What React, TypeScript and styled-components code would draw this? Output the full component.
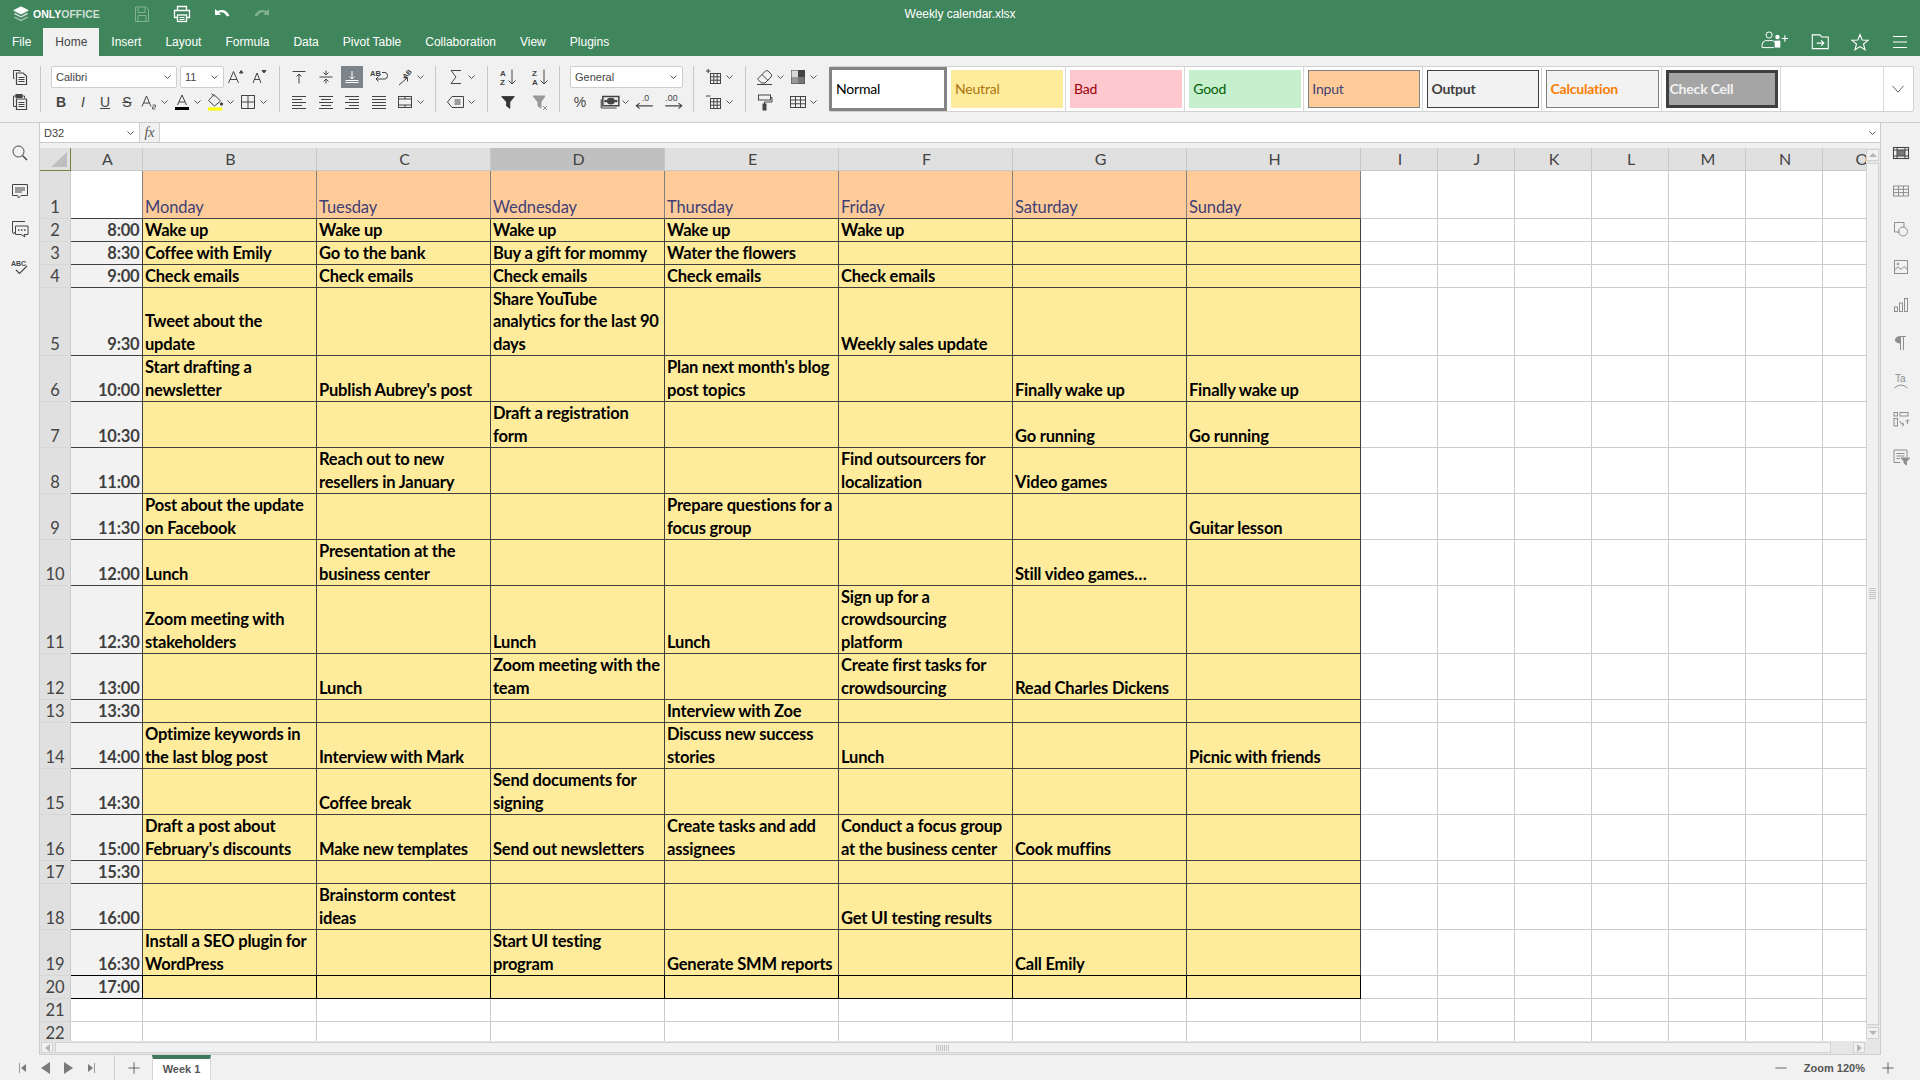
import React from 'react';
import styled, { createGlobalStyle } from 'styled-components';

const GlobalStyle = createGlobalStyle`
	html, body {
		margin: 0;
		padding: 0;
		width: 1920px;
		height: 1080px;
		overflow: hidden;
		background: #f1f1f1;
		font-family: "Liberation Sans", Arial, sans-serif;
	}
	* {
		box-sizing: border-box;
	}
`;

const Page = styled.div`
	display: flex;
	flex-direction: column;
	width: 1920px;
	height: 1080px;
`;

/* green header */
const Header = styled.header`
	flex: 0 0 56px;
	display: flex;
	flex-direction: column;
	background: #40865c;
	color: #ffffff;
	font-size: 12px;
`;

const TitleRow = styled.div`
	height: 28px;
	display: grid;
	grid-template-columns: 1fr auto 1fr;
	align-items: center;
`;

const TitleLeft = styled.div`
	display: flex;
	align-items: center;
`;

const Logo = styled.div`
	display: flex;
	align-items: center;
	gap: 3px;
	width: 122px;
	padding-left: 12px;
	font-size: 10.5px;
	font-weight: 700;
`;

const LogoDim = styled.span`
	color: rgba(255, 255, 255, 0.75);
`;

const QuickButton = styled.div<{ $dim?: boolean }>`
	width: 40px;
	height: 28px;
	display: flex;
	align-items: center;
	justify-content: center;
	opacity: ${(p) => (p.$dim ? 0.35 : 1)};
`;

const FileName = styled.div`
	font-size: 12px;
	letter-spacing: -0.05px;
`;

const TabRow = styled.nav`
	height: 28px;
	display: flex;
	align-items: stretch;
`;

const Tab = styled.div<{ $active?: boolean }>`
	padding: 0 12px;
	display: flex;
	align-items: center;
	background: ${(p) => (p.$active ? '#f1f1f1' : 'transparent')};
	color: ${(p) => (p.$active ? '#444444' : '#ffffff')};
`;

const HeaderActions = styled.div`
	margin-left: auto;
	display: flex;
	align-items: center;
	padding-right: 8px;
	gap: 16px;
`;

const HeaderAction = styled.div<{ $mr?: number }>`
	width: 24px;
	height: 28px;
	margin-right: ${(p) => p.$mr ?? 0}px;
	display: flex;
	align-items: center;
	justify-content: center;
`;

/* ribbon */
const Toolbar = styled.div`
	flex: 0 0 66px;
	display: flex;
	align-items: flex-start;
	padding-top: 10px;
	background: #f1f1f1;
`;

const Group = styled.div<{ $w: number; $pad?: number; $plain?: boolean }>`
	flex: 0 0 ${(p) => p.$w}px;
	height: 46px;
	padding-left: ${(p) => p.$pad ?? 9}px;
	display: flex;
	flex-direction: column;
	gap: 3px;
	border-right: ${(p) => (p.$plain ? 'none' : '1px solid #c8c8c8')};
`;

const Row = styled.div<{ $gap?: number }>`
	height: 22px;
	display: flex;
	align-items: center;
	gap: ${(p) => p.$gap ?? 0}px;
`;

const Btn = styled.div<{ $active?: boolean; $ml?: number }>`
	flex: 0 0 22px;
	height: 22px;
	margin-left: ${(p) => p.$ml ?? 0}px;
	display: flex;
	align-items: center;
	justify-content: center;
	color: #444444;
	background: ${(p) => (p.$active ? '#7d858b' : 'transparent')};
`;

const Split = styled.div<{ $ml?: number }>`
	flex: 0 0 33px;
	height: 22px;
	margin-left: ${(p) => p.$ml ?? 0}px;
	display: flex;
	align-items: center;
`;

const Combo = styled.div<{ $w: number; $ml?: number }>`
	flex: 0 0 ${(p) => p.$w}px;
	height: 22px;
	margin-left: ${(p) => p.$ml ?? 1}px;
	padding: 0 4px;
	display: flex;
	align-items: center;
	justify-content: space-between;
	background: #ffffff;
	border: 1px solid #cfcfcf;
	border-radius: 2px;
	font-size: 11px;
	color: #444444;
`;

const TextIcon = styled.span<{ $weight?: number; $italic?: boolean; $deco?: string }>`
	font-family: "Liberation Sans", Arial, sans-serif;
	font-size: 14px;
	font-weight: ${(p) => p.$weight ?? 400};
	font-style: ${(p) => (p.$italic ? 'italic' : 'normal')};
	text-decoration: ${(p) => p.$deco ?? 'none'};
	color: #444444;
`;

const Glyph = styled.svg.attrs({ viewBox: '0 0 20 20', fill: 'none' })<{ $size?: number }>`
	width: ${(p) => p.$size ?? 20}px;
	height: ${(p) => p.$size ?? 20}px;
	stroke: #444444;
	stroke-width: 1;
	flex: none;
	display: block;
`;

const WhiteGlyph = styled(Glyph)`
	stroke: #ffffff;
`;

const GreyGlyph = styled(Glyph)`
	stroke: #8f8f8f;
`;

const ChevronMark = styled.svg.attrs({ viewBox: '0 0 9 6', fill: 'none' })`
	width: 9px;
	height: 6px;
	stroke: #555555;
	stroke-width: 1;
	flex: none;
`;

const Chevron = () => (
	<ChevronMark>
		<path d="M1.5 1.5 L4.5 4.5 L7.5 1.5" />
	</ChevronMark>
);

/* cell style gallery */
const Gallery = styled.div`
	flex: 0 0 1084.5px;
	height: 46px;
	display: flex;
	background: #ffffff;
	border: 1px solid #d2d2d2;
	border-radius: 2px;
`;

const SelectedItem = styled.div`
	flex: 0 0 118px;
	margin-left: -1px;
	display: flex;
	border: 3px solid #848484;
`;

const StyleItem = styled.div`
	flex: 0 0 119.1px;
	padding: 3px 2px 3px 4px;
	border-right: 1px solid #d8d8d8;
	display: flex;
`;

const StyleFill = styled.div<{ $bg: string; $fg: string; $border?: string; $bold?: boolean; $bw?: number }>`
	flex: 1;
	display: flex;
	align-items: center;
	padding-left: ${(p) => (p.$border ? 4 - (p.$bw ?? 1) : 4)}px;
	padding-bottom: 2px;
	background: ${(p) => p.$bg};
	color: ${(p) => p.$fg};
	border: ${(p) => (p.$border ? `${p.$bw ?? 1}px solid ${p.$border}` : 'none')};
	font-family: Lato, sans-serif;
	font-size: 14px;
	font-weight: ${(p) => (p.$bold ? 700 : 400)};
	letter-spacing: -0.2px;
`;

const GalleryBlank = styled.div`
	flex: 1;
	border-right: 1px solid #d8d8d8;
`;

const GalleryMore = styled.div`
	flex: 0 0 29px;
	display: flex;
	align-items: center;
	justify-content: center;
`;

/* work area */
const Body = styled.div`
	flex: 0 0 933px;
	min-height: 0;
	display: flex;
	border-top: 1px solid #cbcbcb;
`;

const Rail = styled.aside<{ $side: 'left' | 'right' }>`
	flex: 0 0 40px;
	display: flex;
	flex-direction: column;
	align-items: center;
	gap: 18px;
	padding-top: 20px;
	background: #f1f1f1;
	border-${(p) => (p.$side === 'left' ? 'right' : 'left')}: 1px solid #cbcbcb;
`;

const Center = styled.main`
	flex: 1;
	min-width: 0;
	min-height: 0;
	display: flex;
	flex-direction: column;
`;

const FormulaBar = styled.div`
	flex: 0 0 20px;
	display: flex;
	background: #ffffff;
	border-bottom: 1px solid #cbcbcb;
`;

const NameBox = styled.div`
	flex: 0 0 100px;
	padding: 0 4px;
	display: flex;
	align-items: center;
	justify-content: space-between;
	border-right: 1px solid #d0d0d0;
	font-size: 11px;
	color: #444444;
`;

const FxBox = styled.div`
	flex: 0 0 20px;
	display: flex;
	align-items: center;
	justify-content: center;
	background: #f1f1f1;
	border-right: 1px solid #d0d0d0;
	font-family: "Liberation Serif", serif;
	font-style: italic;
	font-size: 14px;
	color: #555555;
`;

const FormulaInput = styled.div`
	flex: 1;
	display: flex;
	align-items: center;
	justify-content: flex-end;
	padding-right: 3px;
`;

const SheetRow = styled.div`
	flex: 0 0 893px;
	height: 893px;
	min-height: 0;
	margin-top: 5px;
	display: flex;
`;

const SheetClip = styled.div`
	flex: 0 0 1826px;
	height: 893px;
	overflow: hidden;
	background: #ffffff;
`;

const Corner = styled.div`
	height: 23px;
	background: #e0e0e0;
	border-right: 1px solid #74803c;
	border-bottom: 1px solid #74803c;
	display: flex;
	align-items: flex-end;
	justify-content: flex-end;
	padding: 0 3px 3px 0;
`;

const CornerMark = styled.svg.attrs({ viewBox: '0 0 16 15' })`
	width: 16px;
	height: 15px;
	fill: #bfbfbf;
`;

const ColHead = styled.div<{ $active?: boolean }>`
	height: 23px;
	padding-left: 2px;
	display: flex;
	align-items: center;
	justify-content: center;
	background: ${(p) => (p.$active ? '#c0c0c0' : '#e0e0e0')};
	border-right: 1px solid #c8c8c8;
	border-bottom: 1px solid #c8c8c8;
	color: #444444;
	font-size: 16px;
`;

const RowHead = styled.div`
	display: flex;
	align-items: flex-end;
	justify-content: center;
	background: #e0e0e0;
	border-right: 1px solid #cbcbcb;
	border-bottom: 1px solid #d6d6d6;
	color: #444444;
`;

// sits a pixel low in its line, as the sheet's own text does
const CellText = styled.span`
	margin-bottom: -1px;
`;

type CellKind = 'blankA' | 'day' | 'time' | 'task' | 'empty';

const cellBackground: Record<CellKind, string> = {
	blankA: '#ffffff',
	day: '#ffcc99',
	time: '#f2f2f2',
	task: '#ffeb9c',
	empty: '#ffffff',
};

const Cell = styled.div<{ $kind: CellKind; $last?: boolean; $close?: boolean }>`
	display: flex;
	align-items: flex-end;
	justify-content: ${(p) => (p.$kind === 'time' ? 'flex-end' : 'flex-start')};
	padding: 0 2.5px 0 2px;
	white-space: pre;
	background: ${(p) => cellBackground[p.$kind]};
	color: ${(p) => (p.$kind === 'day' ? '#3f3f76' : p.$kind === 'time' ? '#3f3f3f' : '#000000')};
	font-weight: ${(p) => (p.$kind === 'time' || p.$kind === 'task' ? 700 : 400)};
	letter-spacing: ${(p) => (p.$kind === 'day' ? '-0.1px' : '-0.2px')};
	border-right: 1px solid
		${(p) =>
			p.$kind === 'empty'
				? '#cbcbcb'
				: p.$kind === 'blankA' || p.$kind === 'day'
				? '#7f7f7f'
				: p.$last
				? '#000000'
				: '#3f3f3f'};
	border-bottom: 1px solid
		${(p) =>
			p.$kind === 'empty' ? '#cbcbcb' : p.$last || p.$close ? '#000000' : '#3f3f3f'};
`;

/* scroll bars */
const VScroll = styled.div`
	flex: 0 0 14px;
	padding: 1px 1px 2px 0;
	display: flex;
	flex-direction: column;
	gap: 2px;
	background: #e6e6e6;
`;

const ScrollBtn = styled.div`
	flex: 0 0 12px;
	display: flex;
	align-items: center;
	justify-content: center;
	background: #f1f1f1;
	border: 1px solid #d2d2d2;
`;

const Arrow = styled.div<{ $dir: 'up' | 'down' | 'left' | 'right'; $dark?: boolean; $big?: boolean }>`
	width: 0;
	height: 0;
	flex: none;
	border-style: solid;
	border-color: transparent;
	${(p) => {
		const c = p.$dark ? '#7a7a7a' : '#b5b5b5';
		const a = p.$big ? 6 : 3;
		const b = p.$big ? 9 : 5;
		if (p.$dir === 'up') return `border-width: 0 ${a + 1}px ${a + 1}px; border-bottom-color: ${c};`;
		if (p.$dir === 'down') return `border-width: ${a + 1}px ${a + 1}px 0; border-top-color: ${c};`;
		if (p.$dir === 'left') return `border-width: ${a + (p.$big ? 0 : 1)}px ${b}px ${a + (p.$big ? 0 : 1)}px 0; border-right-color: ${c};`;
		return `border-width: ${a + (p.$big ? 0 : 1)}px 0 ${a + (p.$big ? 0 : 1)}px ${b}px; border-left-color: ${c};`;
	}}
`;

const VThumb = styled.div`
	flex: 1;
	display: flex;
	align-items: center;
	justify-content: center;
	background: #f1f1f1;
	border: 1px solid #d2d2d2;
`;

const VGrip = styled.div`
	width: 7px;
	height: 12px;
	background: repeating-linear-gradient(to bottom, #c4c4c4 0 1px, transparent 1px 2px);
`;

const HScroll = styled.div`
	flex: 0 0 14px;
	padding: 1px 15px 1px 1px;
	display: flex;
	gap: 2px;
	background: #e6e6e6;
	border-bottom: 1px solid #cfcfcf;
`;

const HThumb = styled.div`
	flex: 0 0 1776px;
	display: flex;
	align-items: center;
	justify-content: center;
	background: #f1f1f1;
	border: 1px solid #d2d2d2;
`;

const HGrip = styled.div`
	width: 14px;
	height: 6px;
	background: repeating-linear-gradient(to right, #c4c4c4 0 1px, transparent 1px 2px);
`;

const HSpacer = styled.div`
	flex: 1;
`;

/* status bar */
const StatusBar = styled.footer`
	flex: 0 0 25px;
	display: flex;
	align-items: stretch;
	background: #f1f1f1;
	font-size: 11px;
	color: #444444;
`;

const SheetNav = styled.div`
	flex: 0 0 115px;
	padding-left: 17px;
	display: flex;
	align-items: center;
	gap: 13px;
	border-right: 1px solid #d0d0d0;
`;

const NavIcon = styled.div`
	width: 10px;
	display: flex;
	align-items: center;
	justify-content: center;
	gap: 1px;
`;

const NavBar = styled.div`
	width: 1px;
	height: 10px;
	background: #999999;
	flex: none;
`;

const AddSheet = styled.div`
	flex: 0 0 37px;
	display: flex;
	align-items: center;
	justify-content: center;
`;

const SheetTab = styled.div`
	flex: 0 0 59px;
	display: flex;
	align-items: center;
	justify-content: center;
	background: #ffffff;
	border-top: 4px solid #40785a;
	border-left: 1px solid #d6d6d6;
	border-right: 1px solid #d6d6d6;
	font-weight: 700;
	font-size: 11px;
	color: #555555;
	padding-bottom: 1px;
`;

const ZoomBox = styled.div`
	margin-left: auto;
	padding-right: 24px;
	display: flex;
	align-items: center;
	gap: 15px;
	font-weight: 700;
	color: #555555;
`;

const Plus = () => (
	<Glyph $size={16}>
		<path d="M10 3 V17 M3 10 H17" />
	</Glyph>
);

/* small icon drawings */
const IconCopy = () => (
	<Glyph>
		<path d="M4.5 11.5 H3.5 V3.5 H10 V5" />
		<path d="M6.5 6 H13 L16.5 9 V17.5 H6.5 Z" strokeWidth="1.2" />
		<path d="M8.5 10.5 H14.5 M8.5 12.5 H14.5 M8.5 14.5 H14.5" />
	</Glyph>
);

const IconPaste = () => (
	<Glyph>
		<path d="M6 14.5 H3.5 V4 H6 M12 4 H14.5 V6" />
		<rect x="6" y="2.5" width="6" height="3" fill="#444" />
		<path d="M6.5 7 H16.5 V17.5 H6.5 Z" strokeWidth="1.2" />
		<path d="M8.5 10.5 H14.5 M8.5 12.5 H14.5 M8.5 14.5 H14.5" />
	</Glyph>
);

const IconAlignTop = () => (
	<Glyph>
		<path d="M3.5 4.5 H16.5 M10 7 V16.5 M7.5 9.5 L10 7 L12.5 9.5" />
	</Glyph>
);

const IconAlignMiddle = () => (
	<Glyph>
		<path d="M3.5 10 H16.5 M10 3.5 V8 M7.5 5.5 L10 8 L12.5 5.5 M10 12 V16.5 M7.5 14.5 L10 12 L12.5 14.5" />
	</Glyph>
);

const IconAlignBottom = () => (
	<WhiteGlyph>
		<path d="M3.5 13.5 H16.5 M3.5 15.5 H16.5 M10 4 V12 M7.5 9.5 L10 12 L12.5 9.5" />
	</WhiteGlyph>
);

const IconWrap = () => (
	<Glyph>
		<text x="1" y="9" fontSize="7.5" fontWeight="700" fill="#444" stroke="none" fontFamily="Liberation Sans">AB</text>
		<path d="M13 5.5 H16 Q18.5 5.5 18.5 8.5 Q18.5 12 16 12 H7 M9.5 9.5 L7 12 L9.5 14.5" />
	</Glyph>
);

const IconOrient = () => (
	<Glyph>
		<text x="7" y="9.5" fontSize="7" fontWeight="700" fill="#444" stroke="none" fontFamily="Liberation Sans" transform="rotate(-45 12 7)">AB</text>
		<path d="M4 18 L12 11 M8.5 10.5 H12.5 V14.5" />
	</Glyph>
);

const lines = (rows: number[][]) => rows.map(([x1, x2, y]) => `M${x1} ${y} H${x2}`).join(' ');

const IconLines = ({ rows }: { rows: number[][] }) => (
	<Glyph>
		<path d={lines(rows)} strokeWidth="1.1" />
	</Glyph>
);

const IconMerge = () => (
	<Glyph>
		<rect x="3.5" y="4.5" width="13" height="11" />
		<path d="M3.5 7 H16.5 M3.5 13 H16.5 M10 7 V4.5 M10 13 V15.5" />
	</Glyph>
);

const IconSum = () => (
	<Glyph>
		<path d="M15 3.5 H5 L10 10 L5 16.5 H15" />
	</Glyph>
);

const IconNamed = () => (
	<Glyph>
		<path d="M6 4.5 H17.5 V15.5 H6 L1.5 10 Z" />
		<path d="M8.5 8 H14.5 M8.5 10 H14.5 M8.5 12 H14.5" />
	</Glyph>
);

const IconSort = ({ top, bottom }: { top: string; bottom: string }) => (
	<Glyph>
		<text x="2" y="9" fontSize="8" fontWeight="700" fill="#444" stroke="none" fontFamily="Liberation Sans">{top}</text>
		<text x="2" y="17.5" fontSize="8" fontWeight="700" fill="#444" stroke="none" fontFamily="Liberation Sans">{bottom}</text>
		<path d="M14 2.5 V16.5 M10.5 13.5 L14 17 L17.5 13.5" />
	</Glyph>
);

const IconFilter = () => (
	<Glyph $size={18}>
		<path d="M3 4 H17 L12 10 V17 L8.5 14.5 V10 Z" fill="#333" stroke="#333" />
	</Glyph>
);

const IconFilterClear = () => (
	<GreyGlyph>
		<path d="M4 4 H16 L12 10 V16 L9 14 V10 Z" fill="#999" stroke="#999" />
		<path d="M14 14 L18 18 M18 14 L14 18" />
	</GreyGlyph>
);

const IconMoney = () => (
	<Glyph $size={22}>
		<path d="M3.5 5 H18 V13.5 H3.5 Z" strokeWidth="1.4" />
		<path d="M2 15.5 H16 M2 7.5 V15.5" />
		<ellipse cx="10.8" cy="9.2" rx="3.2" ry="2.6" fill="#444" />
		<circle cx="6" cy="9.2" r="0.8" fill="#444" />
		<circle cx="15.6" cy="9.2" r="0.8" fill="#444" />
	</Glyph>
);

const IconDecimal = ({ label, right }: { label: string; right?: boolean }) => (
	<Glyph $size={22}>
		<text x={right ? 3 : 8} y="9" fontSize="8" fill="#444" stroke="none" fontFamily="Liberation Sans">{label}</text>
		{right ? (
			<path d="M3 13.5 H18 M15 11 L18 13.5 L15 16" />
		) : (
			<path d="M18 13.5 H3 M6 11 L3 13.5 L6 16" />
		)}
	</Glyph>
);

const IconCells = ({ minus }: { minus?: boolean }) => (
	<Glyph>
		<path d={minus ? 'M2 4 H6.5' : 'M2 4 H6.5 M4.2 1.8 V6.2'} />
		<rect x="6.5" y="6.5" width="10" height="10" />
		<path d="M6.5 9.8 H16.5 M6.5 13.2 H16.5 M9.8 6.5 V16.5 M13.2 6.5 V16.5" />
	</Glyph>
);

const IconEraser = () => (
	<Glyph>
		<path d="M3 11.5 L10.5 4 Q12 3 13 4 L16.5 7.5 Q17 9 16 10 L10 16 H6.5 L3 12.5 Z" />
		<path d="M7 7.5 L13 13.5" />
		<path d="M2 17.5 H17" />
	</Glyph>
);

const IconSwatch = () => (
	<Glyph>
		<rect x="3.5" y="3.5" width="13" height="13" fill="#fff" />
		<rect x="3.5" y="3.5" width="6.5" height="6.5" fill="#d8d8d8" stroke="none" />
		<rect x="10" y="3.5" width="6.5" height="6.5" fill="#444" stroke="none" />
		<rect x="3.5" y="10" width="6.5" height="6.5" fill="#999" stroke="none" />
		<rect x="10" y="10" width="6.5" height="6.5" fill="#777" stroke="none" />
	</Glyph>
);

const IconRoller = () => (
	<Glyph>
		<rect x="3.5" y="3" width="12" height="5" />
		<path d="M15.5 5.5 H17 V10 H9.5 V12" />
		<rect x="8" y="12" width="3" height="6" fill="#444" />
	</Glyph>
);

const IconTable = () => (
	<Glyph>
		<rect x="2.5" y="4.5" width="15" height="11" />
		<path d="M2.5 8 H17.5 M2.5 11.8 H17.5 M7.5 4.5 V15.5 M12.5 4.5 V15.5" />
	</Glyph>
);

const IconBorders = () => (
	<Glyph>
		<rect x="3.5" y="3.5" width="13" height="13" />
		<path d="M10 3.5 V16.5 M3.5 10 H16.5" />
	</Glyph>
);

const IconFontColor = () => (
	<Glyph>
		<path d="M5.5 13 L10 3 L14.5 13 M7 10 H13" />
		<rect x="3" y="15" width="14" height="3" fill="#000" stroke="none" />
	</Glyph>
);

const IconFillColor = () => (
	<Glyph>
		<path d="M9 2.5 L15.5 9 L9.5 14 L3.5 8.5 Z M6.5 1.5 L9.5 4.5" />
		<circle cx="16.5" cy="12" r="1.2" fill="#444" />
		<rect x="3" y="15.5" width="14" height="3" fill="#ffff00" stroke="none" />
	</Glyph>
);

const IconSubscript = () => (
	<Glyph>
		<path d="M3 14.5 L7.5 4 L12 14.5 M4.5 11 H10.5" />
		<path d="M13.5 13 H16.5 V15 H13.5 V17 H16.5" strokeWidth="0.8" />
	</Glyph>
);

const IconGrowFont = ({ shrink }: { shrink?: boolean }) => (
	<Glyph>
		<path d={shrink ? 'M5 16 L9 6 L13 16 M6.2 12.5 H11.8' : 'M3.5 16 L8.5 4.5 L13.5 16 M5 12.5 H12'} />
		<path d={shrink ? 'M14 3.5 H18 L16 6 Z' : 'M14.5 6 H18 L16.2 3.5 Z'} fill="#444" />
	</Glyph>
);

const IconStack = () => (
	<WhiteGlyph $size={18}>
		<path d="M10 2 L18 6 L10 10 L2 6 Z" fill="#fff" />
		<path d="M3.5 9 L10 12.5 L16.5 9 L18 10 L10 14 L2 10 Z" fill="#fff" stroke="none" opacity="0.8" />
		<path d="M3.5 13 L10 16.5 L16.5 13 L18 14 L10 18 L2 14 Z" fill="#fff" stroke="none" opacity="0.55" />
	</WhiteGlyph>
);

const IconSave = () => (
	<WhiteGlyph>
		<path d="M3.5 3 H14 L16.5 5.5 V17.5 H3.5 Z" />
		<path d="M6 3 V8.5 H13 V3 M6 17.5 V11.5 H14 V17.5" />
	</WhiteGlyph>
);

const IconPrint = () => (
	<WhiteGlyph $size={20}>
		<path d="M5.5 6.5 V2.5 H14.5 V6.5" strokeWidth="1.3" />
		<path d="M5 13.5 H2.5 V6.5 H17.5 V13.5 H15" strokeWidth="1.3" />
		<rect x="5.5" y="11" width="9" height="6.5" strokeWidth="1.3" />
		<path d="M7.5 13.5 H12.5 M7.5 15.5 H12.5" />
	</WhiteGlyph>
);

const IconUndo = () => (
	<WhiteGlyph>
		<path d="M3 5 V11 H9 L6.8 8.8 Q11.5 6.5 15 12.5 L17.5 11.5 Q13.5 3.5 5.5 7 Z" fill="#fff" stroke="none" />
	</WhiteGlyph>
);

const IconRedo = () => (
	<WhiteGlyph>
		<path d="M17 5 V11 H11 L13.2 8.8 Q8.5 6.5 5 12.5 L2.5 11.5 Q6.5 3.5 14.5 7 Z" fill="#fff" stroke="none" />
	</WhiteGlyph>
);

const IconAddUser = () => (
	<WhiteGlyph $size={28}>
		<circle cx="6.5" cy="5" r="2.2" strokeWidth="0.7" />
		<path d="M1.5 14 V12 Q1.5 9.5 4 9 H9 Q11 9.5 11 11" strokeWidth="0.7" />
		<path d="M1.5 14 H10" strokeWidth="0.7" />
		<circle cx="12.5" cy="6.5" r="1.6" fill="#fff" stroke="none" />
		<rect x="10.5" y="9" width="4" height="5" fill="#fff" stroke="none" />
		<path d="M15.5 7.5 H20 M17.8 5.2 V9.8" strokeWidth="0.8" />
	</WhiteGlyph>
);

const IconFolder = () => (
	<WhiteGlyph $size={22}>
		<path d="M3 3.5 H10 L11.5 5.5 H17.5 V16 H3 Z" />
		<path d="M7 11 H13.5 M11 8.5 L13.5 11 L11 13.5" />
	</WhiteGlyph>
);

const IconStar = () => (
	<WhiteGlyph>
		<path d="M10 2.5 L12.2 8 L18 8.3 L13.5 12 L15 17.8 L10 14.6 L5 17.8 L6.5 12 L2 8.3 L7.8 8 Z" strokeWidth="1.1" />
	</WhiteGlyph>
);

const IconMenu = () => (
	<WhiteGlyph>
		<path d="M3 4.5 H17 M3 10 H17 M3 15.5 H17" strokeWidth="1.1" />
	</WhiteGlyph>
);

const IconSearch = () => (
	<Glyph>
		<circle cx="8.5" cy="8.5" r="5.5" />
		<path d="M12.5 12.5 L17 17" strokeWidth="1.4" />
	</Glyph>
);

const IconComment = () => (
	<Glyph>
		<path d="M2.5 3.5 H17.5 V14.5 H11 L8.5 17 L7.5 14.5 H2.5 Z" />
		<path d="M5 7 H15 M5 9 H15 M5 11 H12" />
	</Glyph>
);

const IconChat = () => (
	<Glyph>
		<path d="M7 2.5 H2.5 V13 L3.5 15 L5.5 12.5" />
		<path d="M2.5 2.5 H15" />
		<path d="M5.5 7 H18 V15.5 H14 L15 18 L11 15.5 H5.5 Z" />
		<path d="M8 11 H9.5 M11 11 H12.5 M14 11 H15.5" strokeWidth="1.4" />
	</Glyph>
);

const IconSpell = () => (
	<Glyph>
		<text x="1" y="9" fontSize="7" fontWeight="700" fill="#444" stroke="none" fontFamily="Liberation Sans">ABC</text>
		<path d="M6 13 L9.5 16.5 L17 9" strokeWidth="1.1" />
	</Glyph>
);

const IconCellSide = () => (
	<Glyph>
		<rect x="2.5" y="4.5" width="15" height="11" strokeWidth="1.1" />
		<rect x="6" y="7" width="8" height="6" fill="#777" stroke="none" />
		<path d="M2.5 7 H17.5 M2.5 13 H17.5 M6 4.5 V15.5 M14 4.5 V15.5" />
	</Glyph>
);

const IconTableSide = () => (
	<GreyGlyph>
		<rect x="2.5" y="5" width="15" height="10" />
		<path d="M2.5 8.3 H17.5 M2.5 11.6 H17.5 M7.5 5 V15 M12.5 5 V15" />
	</GreyGlyph>
);

const IconShapeSide = () => (
	<GreyGlyph>
		<path d="M9 13 H3.5 V3.5 H13 V8" />
		<circle cx="12" cy="12.5" r="4.5" />
	</GreyGlyph>
);

const IconImageSide = () => (
	<GreyGlyph>
		<rect x="3.5" y="3.5" width="13" height="13" />
		<circle cx="7" cy="7" r="0.9" />
		<path d="M3.5 13 L7 10 L10 12.5 L13 9.5 L16.5 12.5" />
	</GreyGlyph>
);

const IconChartSide = () => (
	<GreyGlyph>
		<rect x="3.5" y="12" width="3" height="4.5" />
		<rect x="8.5" y="8" width="3" height="8.5" />
		<rect x="13.5" y="3.5" width="3" height="13" />
	</GreyGlyph>
);

const IconParagraphSide = () => (
	<GreyGlyph>
		<path d="M9.5 3.5 H15 M9.5 3.5 V17 M12.5 3.5 V17" />
		<path d="M9.5 3.5 Q4.5 3.5 4.5 7 Q4.5 10 9.5 10 Z" fill="#8f8f8f" />
	</GreyGlyph>
);

const IconTextArtSide = () => (
	<GreyGlyph>
		<text x="4" y="11" fontSize="10" fill="#8f8f8f" stroke="none" fontFamily="Liberation Sans">Ta</text>
		<path d="M3.5 17 Q10 11 16.5 17" />
	</GreyGlyph>
);

const IconPivotSide = () => (
	<GreyGlyph>
		<rect x="3" y="3.5" width="3.5" height="3.5" />
		<rect x="9" y="3.5" width="8" height="3.5" />
		<rect x="3" y="9.5" width="3.5" height="7.5" />
		<path d="M9 12 Q9 15.5 13 15.5 M11 13.7 L13 15.5 L11 17.3 M16.5 15 V11 M14.7 12.5 L16.5 10.7 L18.3 12.5" />
	</GreyGlyph>
);

const IconSlicerSide = () => (
	<GreyGlyph>
		<path d="M9 15.5 H3 V3 H16 V10" />
		<path d="M5.5 6.5 H13.5 M5.5 9 H13.5 M5.5 11.5 H9" />
		<path d="M10 11 H18.5 L15.5 14.5 V18 L13 16 V14.5 Z" fill="#8f8f8f" />
	</GreyGlyph>
);

const tabs = ['File', 'Home', 'Insert', 'Layout', 'Formula', 'Data', 'Pivot Table', 'Collaboration', 'View', 'Plugins'];

const cellStyles = [
	{ name: 'Neutral', bg: '#ffeb9c', fg: '#a9760d' },
	{ name: 'Bad', bg: '#ffc7ce', fg: '#9c0006' },
	{ name: 'Good', bg: '#c6efce', fg: '#006100' },
	{ name: 'Input', bg: '#ffcc99', fg: '#3f3f76', border: '#7f7f7f' },
	{ name: 'Output', bg: '#f2f2f2', fg: '#3f3f3f', border: '#3f3f3f', bold: true },
	{ name: 'Calculation', bg: '#f2f2f2', fg: '#fa7d00', border: '#7f7f7f', bold: true },
	{ name: 'Check Cell', bg: '#a5a5a5', fg: '#f2f2f2', border: '#3f3f3f', bold: true, bw: 3 },
];

const columnLetters = 'ABCDEFGHIJKLMNO'.split('');
const days = ['Monday', 'Tuesday', 'Wednesday', 'Thursday', 'Friday', 'Saturday', 'Sunday'];

// row height, time, then Monday to Sunday
const schedule: [number, string, ...string[]][] = [
	[23, '8:00', 'Wake up', 'Wake up', 'Wake up', 'Wake up', 'Wake up', '', ''],
	[23, '8:30', 'Coffee with Emily', 'Go to the bank', 'Buy a gift for mommy', 'Water the flowers', '', '', ''],
	[23, '9:00', 'Check emails', 'Check emails', 'Check emails', 'Check emails', 'Check emails', '', ''],
	[68, '9:30', 'Tweet about the\nupdate', '', 'Share YouTube\nanalytics for the last 90\ndays', '', 'Weekly sales update', '', ''],
	[46, '10:00', 'Start drafting a\nnewsletter', "Publish Aubrey's post", '', "Plan next month's blog\npost topics", '', 'Finally wake up', 'Finally wake up'],
	[46, '10:30', '', '', 'Draft a registration\nform', '', '', 'Go running', 'Go running'],
	[46, '11:00', '', 'Reach out to new\nresellers in January', '', '', 'Find outsourcers for\nlocalization', 'Video games', ''],
	[46, '11:30', 'Post about the update\non Facebook', '', '', 'Prepare questions for a\nfocus group', '', '', 'Guitar lesson'],
	[46, '12:00', 'Lunch', 'Presentation at the\nbusiness center', '', '', '', 'Still video games…', ''],
	[68, '12:30', 'Zoom meeting with\nstakeholders', '', 'Lunch', 'Lunch', 'Sign up for a\ncrowdsourcing\nplatform', '', ''],
	[46, '13:00', '', 'Lunch', 'Zoom meeting with the\nteam', '', 'Create first tasks for\ncrowdsourcing', 'Read Charles Dickens', ''],
	[23, '13:30', '', '', '', 'Interview with Zoe', '', '', ''],
	[46, '14:00', 'Optimize keywords in\nthe last blog post', 'Interview with Mark', '', 'Discuss new success\nstories', 'Lunch', '', 'Picnic with friends'],
	[46, '14:30', '', 'Coffee break', 'Send documents for\nsigning', '', '', '', ''],
	[46, '15:00', "Draft a post about\nFebruary's discounts", 'Make new templates', 'Send out newsletters', 'Create tasks and add\nassignees', 'Conduct a focus group\nat the business center', 'Cook muffins', ''],
	[23, '15:30', '', '', '', '', '', '', ''],
	[46, '16:00', '', 'Brainstorm contest\nideas', '', '', 'Get UI testing results', '', ''],
	[46, '16:30', 'Install a SEO plugin for\nWordPress', '', 'Start UI testing\nprogram', 'Generate SMM reports', '', 'Call Emily', ''],
	[23, '17:00', '', '', '', '', '', '', ''],
];

const gridRows = ['23px', '48px', ...schedule.map((r) => `${r[0]}px`), '23px', '23px'].join(' ');

const SheetGrid = styled.div`
	display: grid;
	grid-template-columns: 31px 72px repeat(7, 174px) repeat(7, 77px);
	grid-template-rows: ${gridRows};
	width: max-content;
	font-family: Lato, sans-serif;
	font-size: 16.5px;
	line-height: 22.8px;
`;

const Blanks = ({ n }: { n: number }) => (
	<>
		{Array.from({ length: n }, (_, i) => (
			<Cell key={i} $kind="empty" />
		))}
	</>
);

export default function App() {
	return (
		<Page>
			<GlobalStyle />
			<Header>
				<TitleRow>
					<TitleLeft>
						<Logo>
							<IconStack />
							<span>
								ONLY<LogoDim>OFFICE</LogoDim>
							</span>
						</Logo>
						<QuickButton $dim><IconSave /></QuickButton>
						<QuickButton><IconPrint /></QuickButton>
						<QuickButton><IconUndo /></QuickButton>
						<QuickButton $dim><IconRedo /></QuickButton>
					</TitleLeft>
					<FileName>Weekly calendar.xlsx</FileName>
				</TitleRow>
				<TabRow>
					{tabs.map((t) => (
						<Tab key={t} $active={t === 'Home'}>{t}</Tab>
					))}
					<HeaderActions>
						<HeaderAction $mr={6}><IconAddUser /></HeaderAction>
						<HeaderAction><IconFolder /></HeaderAction>
						<HeaderAction><IconStar /></HeaderAction>
						<HeaderAction><IconMenu /></HeaderAction>
					</HeaderActions>
				</TabRow>
			</Header>

			<Toolbar>
				<Group $w={41}>
					<Row><Btn><IconCopy /></Btn></Row>
					<Row><Btn><IconPaste /></Btn></Row>
				</Group>
				<Group $w={239}>
					<Row>
						<Combo $w={126}>Calibri<Chevron /></Combo>
						<Combo $w={44} $ml={3}>11<Chevron /></Combo>
						<Btn><IconGrowFont /></Btn>
						<Btn $ml={1}><IconGrowFont shrink /></Btn>
					</Row>
					<Row>
						<Btn><TextIcon $weight={700}>B</TextIcon></Btn>
						<Btn><TextIcon $italic>I</TextIcon></Btn>
						<Btn><TextIcon $deco="underline">U</TextIcon></Btn>
						<Btn><TextIcon $deco="line-through">S</TextIcon></Btn>
						<Split><Btn><IconSubscript /></Btn><Chevron /></Split>
						<Split><Btn><IconFontColor /></Btn><Chevron /></Split>
						<Split><Btn><IconFillColor /></Btn><Chevron /></Split>
						<Split><Btn><IconBorders /></Btn><Chevron /></Split>
					</Row>
				</Group>
				<Group $w={156} $pad={8}>
					<Row $gap={4.5}>
						<Btn><IconAlignTop /></Btn>
						<Btn><IconAlignMiddle /></Btn>
						<Btn $active><IconAlignBottom /></Btn>
						<Btn><IconWrap /></Btn>
						<Split><Btn><IconOrient /></Btn><Chevron /></Split>
					</Row>
					<Row $gap={4.5}>
						<Btn><IconLines rows={[[3, 17, 4.5], [3, 13, 7.5], [3, 17, 10.5], [3, 13, 13.5], [3, 17, 16.5]]} /></Btn>
						<Btn><IconLines rows={[[3, 17, 4.5], [5, 15, 7.5], [3, 17, 10.5], [5, 15, 13.5], [3, 17, 16.5]]} /></Btn>
						<Btn><IconLines rows={[[3, 17, 4.5], [7, 17, 7.5], [3, 17, 10.5], [7, 17, 13.5], [3, 17, 16.5]]} /></Btn>
						<Btn><IconLines rows={[[3, 17, 4.5], [3, 17, 7.5], [3, 17, 10.5], [3, 17, 13.5], [3, 17, 16.5]]} /></Btn>
						<Split><Btn><IconMerge /></Btn><Chevron /></Split>
					</Row>
				</Group>
				<Group $w={52}>
					<Row><Split><Btn><IconSum /></Btn><Chevron /></Split></Row>
					<Row><Split><Btn><IconNamed /></Btn><Chevron /></Split></Row>
				</Group>
				<Group $w={72}>
					<Row $gap={10}>
						<Btn><IconSort top="A" bottom="Z" /></Btn>
						<Btn><IconSort top="Z" bottom="A" /></Btn>
					</Row>
					<Row $gap={9}>
						<Btn><IconFilter /></Btn>
						<Btn><IconFilterClear /></Btn>
					</Row>
				</Group>
				<Group $w={134}>
					<Row><Combo $w={113}>General<Chevron /></Combo></Row>
					<Row>
						<Btn><TextIcon>%</TextIcon></Btn>
						<Btn $ml={8}><IconMoney /></Btn>
						<Chevron />
						<Btn $ml={3}><IconDecimal label=".0" /></Btn>
						<Btn $ml={7}><IconDecimal label=".00" right /></Btn>
					</Row>
				</Group>
				<Group $w={52}>
					<Row><Split><Btn><IconCells /></Btn><Chevron /></Split></Row>
					<Row><Split><Btn><IconCells minus /></Btn><Chevron /></Split></Row>
				</Group>
				<Group $w={83} $pad={8} $plain>
					<Row>
						<Split><Btn><IconEraser /></Btn><Chevron /></Split>
						<Split><Btn><IconSwatch /></Btn><Chevron /></Split>
					</Row>
					<Row>
						<Btn><IconRoller /></Btn>
						<Split $ml={11}><Btn><IconTable /></Btn><Chevron /></Split>
					</Row>
				</Group>
				<Gallery>
					<SelectedItem>
						<StyleFill $bg="#ffffff" $fg="#000000">Normal</StyleFill>
					</SelectedItem>
					{cellStyles.map((s) => (
						<StyleItem key={s.name}>
							<StyleFill $bg={s.bg} $fg={s.fg} $border={s.border} $bold={s.bold} $bw={s.bw}>
								{s.name}
							</StyleFill>
						</StyleItem>
					))}
					<GalleryBlank />
					<GalleryMore>
						<Glyph $size={16}><path d="M3 6 L10 14 L17 6" /></Glyph>
					</GalleryMore>
				</Gallery>
			</Toolbar>

			<Body>
				<Rail $side="left">
					<IconSearch />
					<IconComment />
					<IconChat />
					<IconSpell />
				</Rail>
				<Center>
					<FormulaBar>
						<NameBox>D32<Chevron /></NameBox>
						<FxBox>fx</FxBox>
						<FormulaInput><Chevron /></FormulaInput>
					</FormulaBar>
					<SheetRow>
						<SheetClip>
							<SheetGrid>
								<Corner><CornerMark><path d="M16 0 V15 H0 Z" /></CornerMark></Corner>
								{columnLetters.map((c) => (
									<ColHead key={c} $active={c === 'D'}>{c}</ColHead>
								))}
								<RowHead><CellText>1</CellText></RowHead>
								<Cell $kind="blankA" />
								{days.map((d) => (
									<Cell key={d} $kind="day"><CellText>{d}</CellText></Cell>
								))}
								<Blanks n={7} />
								{schedule.map(([, time, ...tasks], i) => {
									const last = i === schedule.length - 1;
									const close = i === schedule.length - 2;
									return (
										<React.Fragment key={time}>
											<RowHead><CellText>{i + 2}</CellText></RowHead>
											<Cell $kind="time" $last={last} $close={close}><CellText>{time}</CellText></Cell>
											{tasks.map((t, j) => (
												<Cell key={j} $kind="task" $last={last} $close={close}><CellText>{t}</CellText></Cell>
											))}
											<Blanks n={7} />
										</React.Fragment>
									);
								})}
								<RowHead><CellText>21</CellText></RowHead>
								<Blanks n={15} />
								<RowHead><CellText>22</CellText></RowHead>
								<Blanks n={15} />
							</SheetGrid>
						</SheetClip>
						<VScroll>
							<ScrollBtn><Arrow $dir="up" /></ScrollBtn>
							<VThumb><VGrip /></VThumb>
							<ScrollBtn><Arrow $dir="down" /></ScrollBtn>
						</VScroll>
					</SheetRow>
					<HScroll>
						<ScrollBtn><Arrow $dir="left" /></ScrollBtn>
						<HThumb><HGrip /></HThumb>
						<HSpacer />
						<ScrollBtn><Arrow $dir="right" /></ScrollBtn>
					</HScroll>
				</Center>
				<Rail $side="right">
					<IconCellSide />
					<IconTableSide />
					<IconShapeSide />
					<IconImageSide />
					<IconChartSide />
					<IconParagraphSide />
					<IconTextArtSide />
					<IconPivotSide />
					<IconSlicerSide />
				</Rail>
			</Body>

			<StatusBar>
				<SheetNav>
					<NavIcon><NavBar /><Arrow $dir="left" $dark /></NavIcon>
					<NavIcon><Arrow $dir="left" $dark $big /></NavIcon>
					<NavIcon><Arrow $dir="right" $dark $big /></NavIcon>
					<NavIcon><Arrow $dir="right" $dark /><NavBar /></NavIcon>
				</SheetNav>
				<AddSheet><Plus /></AddSheet>
				<SheetTab>Week 1</SheetTab>
				<ZoomBox>
					<Glyph $size={16}><path d="M3 10 H17" /></Glyph>
					<span>Zoom 120%</span>
					<Plus />
				</ZoomBox>
			</StatusBar>
		</Page>
	);
}
